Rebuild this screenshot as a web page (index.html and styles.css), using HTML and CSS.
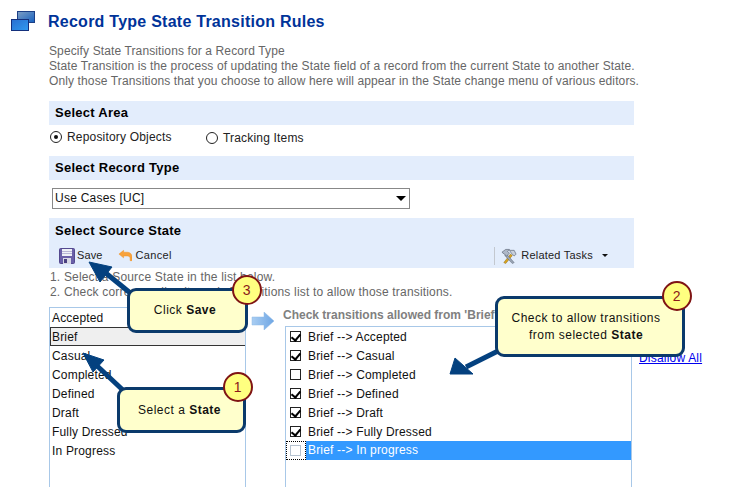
FILE: index.html
```html
<!DOCTYPE html>
<html lang="en">
<head>
<meta charset="utf-8">
<title>Record Type State Transition Rules</title>
<link rel="stylesheet" href="styles.css">
</head>
<body>
<div class="page">
  <header class="title-row">
    <svg class="title-icon" width="38" height="32" viewBox="0 0 38 32">
      <defs>
        <linearGradient id="g1" x1="0" y1="0" x2="1" y2="1"><stop offset="0" stop-color="#7f9fc4"/><stop offset="1" stop-color="#1560c0"/></linearGradient>
        <linearGradient id="g2" x1="0" y1="0" x2="1" y2="1"><stop offset="0" stop-color="#2a6fd0"/><stop offset="1" stop-color="#2f9af0"/></linearGradient>
      </defs>
      <rect x="17.5" y="11.500" width="17" height="11" fill="url(#g1)" stroke="#1c3f86"/>
      <rect x="11.5" y="19.500" width="17" height="11" fill="url(#g2)" stroke="#14307c"/>
    </svg>
    <h1>Record Type State Transition Rules</h1>
  </header>
  <main class="content">
    <p class="intro">Specify State Transitions for a Record Type<br>State Transition is the process of updating the State field of a record from the current State to another State.<br>Only those Transitions that you choose to allow here will appear in the State change menu of various editors.</p>
    <h2 class="band">Select Area</h2>
    <div class="radios">
      <span class="radio-item first"><span class="radio on"></span><span>Repository Objects</span></span>
      <span class="radio-item second"><span class="radio"></span><span>Tracking Items</span></span>
    </div>
    <h2 class="band">Select Record Type</h2>
    <div class="select"><span>Use Cases [UC]</span><span class="select-btn"><span class="caret"></span></span></div>
    <section class="source">
      <h2 class="band flush">Select Source State</h2>
      <div class="toolbar">
        <span class="tool save-tool">
          <svg width="16" height="16" viewBox="0 0 16 16"><rect x="0.5" y="0.5" width="15" height="15" rx="1" fill="#6a5fa8" stroke="#54498f"/><rect x="3" y="1" width="10" height="7" fill="#eef0f6"/><rect x="3" y="3" width="10" height="1" fill="#b9b6d6"/><rect x="3" y="5" width="10" height="1" fill="#b9b6d6"/><rect x="4" y="10" width="8" height="6" fill="#d8d8e4"/><rect x="5" y="11" width="3" height="4" fill="#4a4080"/></svg>
          <span class="tool-text">Save</span>
        </span>
        <span class="tool cancel-tool">
          <svg width="14" height="13" viewBox="0 0 15 13"><path d="M6 1 1 5l5 4V7h4c2 0 3 1 3 3v2h2V8c0-3-2-5-5-5H6z" fill="#f7a23c" stroke="#f09020" stroke-width=".5"/></svg>
          <span class="tool-text">Cancel</span>
        </span>
        <span class="tool related">
          <svg width="16" height="16" viewBox="0 0 17 16"><path d="M3 15 10 6l2 1.500L5 16z" fill="#d9a520" stroke="#8a6510" stroke-width=".5"/><path d="M14 15 6 6l-2 1.500L12 16z" fill="#9aa4b4" stroke="#5a6474" stroke-width=".5"/><path d="M1 4 5 1h4L7 3l2 2-3 3z" fill="#aeb8c8" stroke="#5a6474" stroke-width=".7"/><path d="M9 2l5 0 2 4-2 2-3-3z" fill="#c8d0dc" stroke="#5a6474" stroke-width=".7"/></svg>
          <span class="tool-text">Related Tasks</span>
          <span class="down"></span>
        </span>
      </div>
    </section>
    <ol class="steps">
      <li>1. Select a Source State in the list below.</li>
      <li>2. Check corresponding items in Transitions list to allow those transitions.</li>
    </ol>
    <div class="lists">
      <ul class="states">
        <li>Accepted</li>
        <li class="selected">Brief</li>
        <li>Casual</li>
        <li>Completed</li>
        <li>Defined</li>
        <li>Draft</li>
        <li>Fully Dressed</li>
        <li>In Progress</li>
      </ul>
      <svg class="mid-arrow" width="24" height="18" viewBox="0 0 24 18"><defs><linearGradient id="a" x1="0" x2="1"><stop offset="0" stop-color="#a9cdf2"/><stop offset="1" stop-color="#6ea6e4"/></linearGradient></defs><path d="M1 5h12V0l10 9-10 9v-5H1z" fill="url(#a)" stroke="#8fb8e6" stroke-width=".5"/></svg>
      <div class="targets">
        <h3>Check transitions allowed from 'Brief'</h3>
        <ul class="checks">
          <li><span class="box on"></span>Brief --&gt; Accepted</li>
          <li><span class="box on"></span>Brief --&gt; Casual</li>
          <li><span class="box"></span>Brief --&gt; Completed</li>
          <li><span class="box on"></span>Brief --&gt; Defined</li>
          <li><span class="box on"></span>Brief --&gt; Draft</li>
          <li><span class="box on"></span>Brief --&gt; Fully Dressed</li>
          <li class="current"><span class="focus"><span class="box dim"></span></span><span class="cur-text">Brief --&gt; In progress</span></li>
        </ul>
      </div>
      <div class="links"><a href="#">Disallow All</a></div>
    </div>
  </main>

  <svg class="arrows" width="732" height="487" viewBox="0 0 732 487">
    <g fill="#04417f" stroke="#04417f" stroke-linejoin="round">
      <path d="M134 296 102 270" stroke-width="5" fill="none"/>
      <path d="M89 262 112 267 100 282z" stroke-width="1"/>
      <path d="M126 393 94 363" stroke-width="5" fill="none"/>
      <path d="M83 353 104 360 93 372z" stroke-width="1"/>
      <path d="M498 351 466 367" stroke-width="5" fill="none"/>
      <path d="M450 374 455 358 473 374z" stroke-width="1"/>
    </g>
  </svg>

  <div class="callout c-save">Click&nbsp;<b>Save</b><span class="badge">3</span></div>
  <div class="callout c-check">Check to allow transitions<br>from selected&nbsp;<b>State</b><span class="badge">2</span></div>
  <div class="callout c-state">Select a&nbsp;<b>State</b><span class="badge">1</span></div>
</div>
</body>
</html>
```
FILE: styles.css
```css
* { box-sizing: border-box; }
html, body { margin: 0; padding: 0; height: 487px; overflow: hidden; background: #fff; }
body { font-family: "Liberation Sans", Arial, sans-serif; font-size: 12px; color: #000; }
.page { position: relative; width: 732px; height: 487px; overflow: hidden; }

.title-row { display: flex; align-items: flex-start; height: 44px; padding-top: 12px; }
.title-icon { flex: none; overflow: visible; margin-top: -12px; }
.title-row h1 { margin: 0 0 0 10px; font-size: 16px; line-height: 19px; font-weight: bold; color: #003399; letter-spacing: 0.25px; }

.content { padding-left: 49px; width: 720px; }
.intro { margin: 0; font-size: 12px; line-height: 15px; color: #666; letter-spacing: 0.01em; }
.band { margin: 12px 0 0; width: 585px; height: 24px; padding-left: 6px; font-size: 13px; line-height: 24px; font-weight: bold; background: #e3edfc; color: #000; letter-spacing: 0.02em; }
.band.flush { margin: 0; height: 25px; line-height: 25px; }
.radios { display: flex; height: 19px; align-items: flex-start; padding-top: 5px; color: #222; }
.radio-item { display: flex; align-items: center; gap: 5px; line-height: 14px; letter-spacing: 0.015em; }
.radio-item.first { width: 157px; padding-left: 1px; }
.radio-item.second { margin-top: 1px; }
.radio { width: 12px; height: 12px; border: 1px solid #222; border-radius: 50%; background: #fff; position: relative; flex: none; }
.radio.on::after { content: ""; position: absolute; left: 3px; top: 3px; width: 4px; height: 4px; border-radius: 50%; background: #111; }

.select { display: flex; justify-content: space-between; align-items: center; width: 358px; height: 21px; margin: 8px 0 9px 3px; border: 1px solid #888; padding-left: 2px; line-height: 17px; color: #111; letter-spacing: 0.02em; background: #fff; }
.select-btn { display: flex; align-items: center; justify-content: center; width: 17px; height: 19px; }
.caret { width: 0; height: 0; border: 5px solid transparent; border-top: 5px solid #000; border-bottom: 0; }

.source { width: 585px; }
.toolbar { display: flex; align-items: center; height: 25px; background: #e3edfc; padding-left: 10px; color: #222; font-size: 11px; letter-spacing: 0.01em; }
.tool { display: flex; align-items: center; }
.tool-text { margin-bottom: 2px; }
.save-tool { gap: 2px; }
.cancel-tool { gap: 4px; margin-left: 15px; letter-spacing: 0.03em; }
.related { gap: 4px; margin-left: auto; margin-right: 26px; padding-left: 6px; border-left: 1px solid #c3c8cf; height: 18px; letter-spacing: 0.02em; }
.down { margin-left: 5px; width: 0; height: 0; border: 3px solid transparent; border-top: 3px solid #111; border-bottom: 0; }

.steps { list-style: none; margin: 2px 0 0 1px; padding: 0; line-height: 15px; color: #666; letter-spacing: 0.015em; }

.lists { display: flex; align-items: flex-start; margin-top: 1px; height: 200px; }
.states { list-style: none; margin: 6px 0 0 0; padding: 0; flex: none; width: 197px; height: 200px; border: 1px solid #a8c8e8; border-bottom: 0; letter-spacing: 0.015em; color: #111; }
.states li { height: 19px; line-height: 20px; padding-left: 2px; }
.states .selected { background: #efefef; border: 1px solid #333; border-width: 1px 0 1px 1px; padding-left: 1px; line-height: 18px; }
.mid-arrow { flex: none; margin: 11px 0 0 5px; }
.targets { margin: 6px 0 0 10px; width: 347px; flex: none; }
.targets h3 { margin: 0 0 0 -2px; font-size: 12px; line-height: 16px; font-weight: bold; color: #808080; white-space: nowrap; }
.checks { list-style: none; margin: 3px 0 0; padding: 0; height: 200px; border: 1px solid #a8c8e8; border-width: 1px 1px 0 1px; letter-spacing: 0.015em; color: #111; }
.checks li { display: flex; align-items: center; height: 19px; padding-left: 4px; gap: 7px; }
.checks .current { padding-left: 0; gap: 0; }
.focus { display: flex; align-items: center; height: 19px; width: 20px; padding-left: 4px; border: 1px dotted #000; }
.cur-text { flex: 1; height: 19px; line-height: 19px; padding-left: 2px; background: #3399ff; color: #fff; }
.box { display: inline-block; position: relative; width: 11px; height: 11px; border: 1px solid #222; background: #fff; flex: none; }
.box.dim { border-color: #b5c2d0; margin-left: -1px; }
.box.on::after { content: ""; position: absolute; left: 2px; top: 0; width: 4px; height: 7px; border: solid #000; border-width: 0 2px 2px 0; transform: rotate(40deg); }
.links { display: flex; flex-direction: column; margin: 50px 0 0 7px; }
.links a { font-size: 12px; line-height: 14px; color: #0000ee; white-space: nowrap; letter-spacing: 0.2px; }

.arrows { position: absolute; left: 0; top: 0; pointer-events: none; }
.callout { position: absolute; display: flex; align-items: center; justify-content: center; text-align: center; background: #ffffcc; border: 3px solid #0b3a6b; border-radius: 9px; color: #111; font-size: 12px; line-height: 17px; letter-spacing: 0.5px; }
.c-save { left: 127px; top: 288px; width: 121px; height: 45px; padding-right: 5px; }
.c-check { left: 495px; top: 296px; width: 190px; height: 61px; display: block; padding: 11px 8px 0 0; }
.c-state { left: 117px; top: 387px; width: 129px; height: 46px; padding-right: 4px; }
.badge { position: absolute; width: 30px; height: 30px; border-radius: 50%; border: 2px solid #7f1414; background: #ffff80; color: #8a1a1a; font-size: 14px; font-weight: normal; line-height: 26px; text-align: center; }
.c-save .badge { right: -17px; top: -16px; }
.c-check .badge { right: -10px; top: -18px; }
.c-state .badge { right: -10px; top: -18px; }
```
